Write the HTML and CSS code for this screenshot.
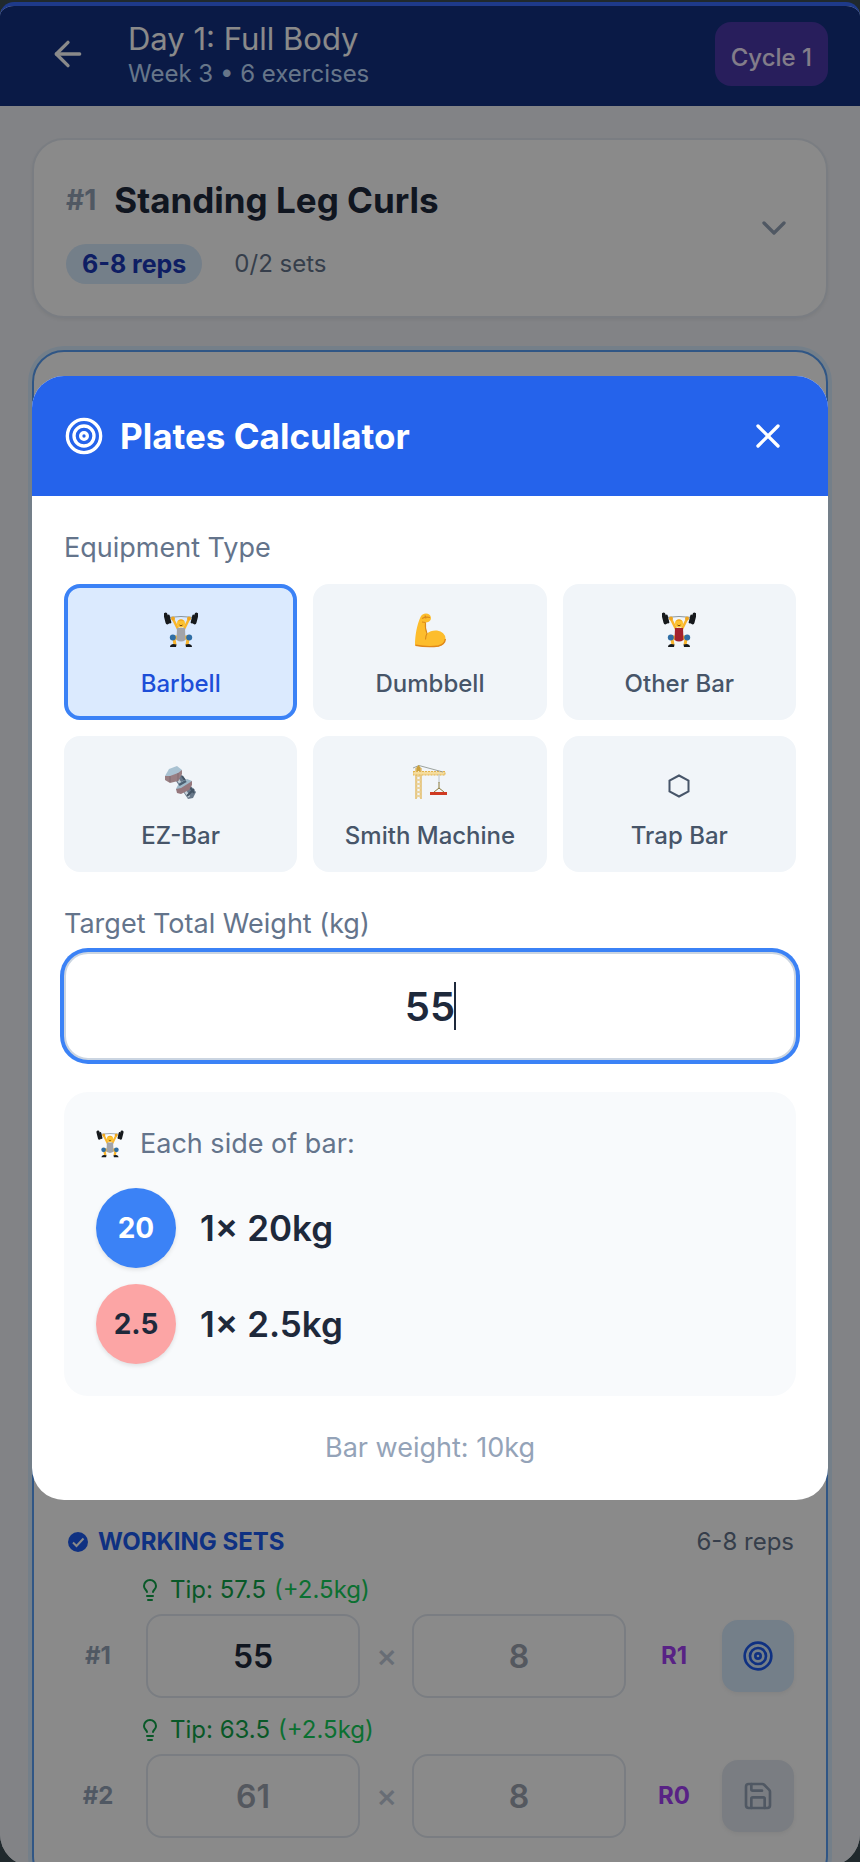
FILE: index.html
```html
<!DOCTYPE html>
<html lang="en">
<head>
  <meta charset="UTF-8">
  <meta name="viewport" content="width=device-width, initial-scale=1.0">
  <title>Day 1: Full Body</title>
  <link rel="stylesheet" href="styles.css">
</head>
<body>
  <!-- Shared icons -->
  <svg class="sprite" aria-hidden="true">
    <symbol id="icon-target" viewBox="0 0 24 24">
      <circle cx="12" cy="12" r="10"/><circle cx="12" cy="12" r="6"/><circle cx="12" cy="12" r="2"/>
    </symbol>
    <symbol id="icon-bulb" viewBox="0 0 24 24">
      <path d="M15 14c.2-1 .7-1.7 1.5-2.5 1-.9 1.5-2.2 1.5-3.5A6 6 0 0 0 6 8c0 1 .2 2.2 1.5 3.5.7.7 1.3 1.5 1.5 2.5"/>
      <path d="M9 18h6"/><path d="M10 22h4"/>
    </symbol>
    <symbol id="lifter" viewBox="0 0 34 36">
      <path d="M3 5.500Q17 3.500 31 5.500" fill="none" stroke="#8a969e" stroke-width="1"/>
      <path d="M9 7l5 10M25 7l-5 10" stroke="#f9b52c" stroke-width="2.600" stroke-linecap="round"/>
      <circle cx="9" cy="6.500" r="2" fill="#eda51f"/><circle cx="25" cy="6.500" r="2" fill="#eda51f"/>
      <g fill="#16191c">
        <rect x="0.500" y="0.500" width="4" height="12" rx="2" transform="rotate(-14 2.500 6.500)"/>
        <rect x="4" y="2.500" width="2.500" height="9" rx="1" transform="rotate(-14 5.500 7)"/>
        <rect x="29.500" y="0.500" width="4" height="12" rx="2" transform="rotate(14 31.500 6.500)"/>
        <rect x="27.500" y="2.500" width="2.500" height="9" rx="1" transform="rotate(14 28.500 7)"/>
      </g>
      <path d="M10 27l1 6M24 27l-1 6" stroke="#f9b52c" stroke-width="3"/>
      <path d="M15 26l-6-1M19 26l6-1" stroke="#f9b52c" stroke-width="4"/>
      <path d="M13 16h8l.5 12q-4.500 3-9 0z" fill="currentColor"/>
      <circle cx="17" cy="11.500" r="4" fill="#fdc22f"/>
      <path d="M13.500 9.500q3.500-4.500 7 0q-3.500-1.500-7 0z" fill="#f3a91c"/>
      <path d="M15.500 13q1.500 1.500 3 0" fill="none" stroke="#7a4a12" stroke-width="1"/>
      <circle cx="8.800" cy="25.500" r="3" fill="#2f6ea5"/><circle cx="25.200" cy="25.500" r="3" fill="#2f6ea5"/>
      <path d="M6 35q0-2.500 3-3l3.500.5-.5 2.500zM28 35q0-2.500-3-3l-3.500.5.5 2.500z" fill="#16191c"/>
    </symbol>
  </svg>

  <div class="screen">
    <header class="top-bar">
      <button class="back-btn" aria-label="Back">
        <svg class="icon icon-lg" viewBox="0 0 24 24"><path d="M12 19l-7-7 7-7"/><path d="M19 12H5"/></svg>
      </button>
      <div class="top-text">
        <h1>Day 1: Full Body</h1>
        <p>Week 3 • 6 exercises</p>
      </div>
      <button class="cycle-btn">Cycle 1</button>
    </header>

    <main>
      <section class="card summary">
        <div class="summary-info">
          <div class="summary-title">
            <span class="number">#1</span>
            <h2>Standing Leg Curls</h2>
          </div>
          <div class="summary-meta">
            <span class="pill">6-8 reps</span>
            <span>0/2 sets</span>
          </div>
        </div>
        <svg class="icon icon-lg chevron" viewBox="0 0 24 24"><path d="M6 9l6 6 6-6"/></svg>
      </section>

      <section class="card current">
        <div class="exercise-body"></div>

        <div class="sets-heading">
          <svg class="check" viewBox="0 0 24 24"><circle cx="12" cy="12" r="10"/><path d="M7 12.500l3.500 3.500 7-7.500"/></svg>
          <h3>WORKING SETS</h3>
          <span>6-8 reps</span>
        </div>

        <div class="set">
          <p class="tip"><svg class="icon icon-sm"><use href="#icon-bulb"/></svg><span>Tip: 57.5</span><em>(+2.5kg)</em></p>
          <div class="set-row">
            <span class="number">#1</span>
            <input type="text" value="55" placeholder="55" aria-label="Set 1 weight">
            <span class="times">×</span>
            <input type="text" placeholder="8" aria-label="Set 1 reps">
            <span class="rir">R1</span>
            <button class="set-btn plates" aria-label="Plates calculator"><svg class="icon icon-md"><use href="#icon-target"/></svg></button>
          </div>
        </div>

        <div class="set">
          <p class="tip"><svg class="icon icon-sm"><use href="#icon-bulb"/></svg><span>Tip: 63.5</span><em>(+2.5kg)</em></p>
          <div class="set-row">
            <span class="number">#2</span>
            <input type="text" placeholder="61" aria-label="Set 2 weight">
            <span class="times">×</span>
            <input type="text" placeholder="8" aria-label="Set 2 reps">
            <span class="rir">R0</span>
            <button class="set-btn save" aria-label="Save set">
              <svg class="icon icon-md" viewBox="0 0 24 24"><path d="M15.200 3a2 2 0 0 1 1.400.6l3.800 3.800a2 2 0 0 1 .6 1.400V19a2 2 0 0 1-2 2H5a2 2 0 0 1-2-2V5a2 2 0 0 1 2-2z"/><path d="M17 21v-7a1 1 0 0 0-1-1H8a1 1 0 0 0-1 1v7"/><path d="M7 3v4a1 1 0 0 0 1 1h7"/></svg>
            </button>
          </div>
        </div>
      </section>
    </main>

    <!-- Plates calculator -->
    <div class="overlay">
      <div class="modal" role="dialog" aria-labelledby="modal-title">
        <div class="modal-header">
          <svg class="icon icon-lg"><use href="#icon-target"/></svg>
          <h2 id="modal-title">Plates Calculator</h2>
          <button class="close-btn" aria-label="Close">
            <svg class="icon icon-lg" viewBox="0 0 24 24"><path d="M18 6L6 18"/><path d="M6 6l12 12"/></svg>
          </button>
        </div>

        <div class="modal-body">
          <p class="label">Equipment Type</p>
          <div class="equipment">
            <button class="active">
              <svg class="emoji lifter-grey"><use href="#lifter"/></svg>
              Barbell
            </button>
            <button>
              <svg class="emoji" viewBox="0 0 34 36">
                <path d="M2 33.500C2 23 4 13 7.500 5Q9 1.500 13 1.500q4 0 4.800 3.500.7 3-2 4.800-2 1-3.300.7-.8 5 1.500 11Q18 18 24 18.500q8 1.500 8.500 8 0 6-7 8-11 1.500-23.500-1z" fill="#fdbd2c"/>
                <path d="M2.500 33.200q12 2.300 23 .8 6.500-1.800 6.800-7" fill="none" stroke="#e0871a" stroke-width="1.400"/>
                <path d="M12.500 10.500q-.6 6.500 1.500 11-1.500 2.500-1.500 6M9 6.500q4-2 8-1M9 10l3.500.5M12 3.500l1 3" fill="none" stroke="#d98a1b" stroke-width="1.100"/>
              </svg>
              Dumbbell
            </button>
            <button>
              <svg class="emoji lifter-red"><use href="#lifter"/></svg>
              Other Bar
            </button>
            <button>
              <svg class="emoji" viewBox="0 0 34 36">
                <path d="M10 14l5-6 17 20-3 6-5 1z" fill="#68788a"/>
                <path d="M13 14l12 19" stroke="#c3d0d8" stroke-width="2.500"/>
                <path d="M18 12l12 17M23 32l7-7" stroke="#435465" stroke-width="2"/>
                <path d="M1 12L5 5l8-3 5 4-4 7-8 4z" fill="#a9c2d2"/>
                <path d="M1 12l5 0 8-3 4-3v4l-4 7-8 2-5-3z" fill="#997f83"/>
                <path d="M6 12v6M14 9v8" stroke="#7a6870" stroke-width=".8"/>
                <path d="M12 25l3-6 8-4 5 2-2 6-9 6z" fill="#9fb9c9"/>
                <path d="M12 25l5-1 8-5 3-2v4l-3 5-8 4-4-1z" fill="#95777d"/>
                <path d="M15 21l7-4" stroke="#4c6072" stroke-width="2.500"/>
              </svg>
              EZ-Bar
            </button>
            <button>
              <svg class="emoji" viewBox="0 0 34 36">
                <path d="M3 35V4M8 35V4" stroke="#dfb04a" stroke-width="1.200"/>
                <path d="M3 10l5 4-5 4 5 4-5 4 5 4-5 4M8 10l-5 4 5 4-5 4 5 4-5 4 5 4" fill="none" stroke="#e9c77c" stroke-width="1"/>
                <rect x="0" y="7.500" width="32" height="3.500" fill="#f5dc9c" stroke="#e2b34c" stroke-width="1" stroke-dasharray="2 1"/>
                <path d="M0 4l6-2.500L30 8" fill="none" stroke="#929894" stroke-width=".9"/>
                <path d="M3.500 3.500L5.500 1l2 2.500V7h-4z" fill="#caa03c"/>
                <path d="M26 10v9" stroke="#bcc4c8" stroke-width="1"/>
                <path d="M26 18v6M26 24l-5 4M26 24l5 4" fill="none" stroke="#8b7b3c" stroke-width="1"/>
                <rect x="17" y="28" width="17" height="3" fill="#cf3a22"/>
              </svg>
              Smith Machine
            </button>
            <button>
              <svg class="emoji" viewBox="0 0 34 36"><path d="M17 11.500l9.500 5.200v10.600L17 32.500l-9.500-5.200V16.700z" fill="none" stroke="#475569" stroke-width="2"/></svg>
              Trap Bar
            </button>
          </div>

          <label class="label weight-label" for="target-weight">Target Total Weight (kg)</label>
          <div class="weight-field">
            <input type="text" id="target-weight" inputmode="decimal" value="55">
            <span class="caret"></span>
          </div>

          <div class="result">
            <p class="label result-title"><svg class="emoji-sm lifter-grey"><use href="#lifter"/></svg>Each side of bar:</p>
            <ul>
              <li><span class="plate plate-20">20</span>1× 20kg</li>
              <li><span class="plate plate-2">2.5</span>1× 2.5kg</li>
            </ul>
          </div>

          <p class="bar-weight">Bar weight: 10kg</p>
        </div>
      </div>
    </div>
  </div>
</body>
</html>
```
FILE: styles.css
```css
* {
  box-sizing: border-box;
}
body {
  margin: 0;
  padding-top: 2px;
  height: 100vh;
  overflow: hidden;
  background: #20292d;
  color: #1e293b;
  font-family: Inter, "Liberation Sans", sans-serif;
  font-size: 24px;
  line-height: 32px;
}
h1, h2, h3, p, ul {
  margin: 0;
  padding: 0;
}
button, input {
  font: inherit;
  color: inherit;
}
button {
  border: 0;
  padding: 0;
  background: none;
  cursor: pointer;
}
.sprite {
  position: absolute;
  width: 0;
  height: 0;
}
.icon {
  flex-shrink: 0;
  fill: none;
  stroke: currentColor;
  stroke-width: 2;
  stroke-linecap: round;
  stroke-linejoin: round;
}
.icon-sm {
  width: 24px;
  height: 24px;
}
.icon-md {
  width: 32px;
  height: 32px;
}
.icon-lg {
  width: 40px;
  height: 40px;
}

.screen {
  position: relative;
  height: calc(100vh + 2px);
  overflow: hidden;
  border-top: 4px solid #1e3a8a;
  border-radius: 14px 14px 32px 32px;
  background: #f1f3f8;
}

/* Top bar */
.top-bar {
  display: flex;
  align-items: center;
  padding: 12px 32px 16px;
  background: #133182;
  color: #fff;
}
.back-btn {
  display: flex;
  align-items: center;
  justify-content: center;
  width: 72px;
  height: 72px;
  margin-right: 24px;
}
.top-text {
  flex: 1;
  padding-top: 2px;
}
.top-text h1 {
  font-size: 31px;
  font-weight: 400;
  line-height: 38px;
}
.top-text p {
  color: #bfdbfe;
}
.cycle-btn {
  height: 64px;
  padding: 8px 16px 0;
  border-radius: 16px;
  background: #4a38aa;
  color: #f3e8ff;
  font-weight: 500;
}

/* Exercise cards */
main {
  padding: 32px;
}
.card {
  padding: 32px;
  border: 2px solid #e2e8f0;
  border-radius: 32px;
  background: #fff;
  box-shadow: 0 2px 4px rgba(0, 0, 0, 0.06);
}
.number {
  color: #94a3b8;
  font-weight: 700;
}
.summary {
  display: flex;
  align-items: center;
  justify-content: space-between;
  margin-bottom: 32px;
}
.summary-title {
  display: flex;
  align-items: center;
  gap: 18px;
  margin-bottom: 16px;
}
.summary-title .number {
  font-size: 28px;
}
.summary-title h2 {
  font-size: 35px;
  line-height: 56px;
}
.summary-meta {
  display: flex;
  align-items: center;
  gap: 32px;
  color: #64748b;
}
.pill {
  padding: 4px 16px;
  border-radius: 20px;
  background: #d6eafe;
  color: #1a38b8;
  font-size: 25px;
  font-weight: 700;
}
.chevron {
  color: #94a3b8;
}
.current {
  border-color: #5aa0f5;
  box-shadow: 0 0 0 4px #d6eafe;
}
.exercise-body {
  height: 1142px;
}
.sets-heading {
  display: flex;
  align-items: center;
  gap: 8px;
  margin-bottom: 16px;
  color: #64748b;
}
.sets-heading h3 {
  flex: 1;
  color: #1d5cf0;
  font-size: 24px;
}
.check {
  width: 24px;
  height: 24px;
  fill: #1d5cf0;
}
.check path {
  fill: none;
  stroke: #fff;
  stroke-width: 2;
}
.set {
  margin-bottom: 16px;
}
.tip {
  display: flex;
  align-items: center;
  gap: 8px;
  margin: 0 0 8px 72px;
  color: #0fa348;
}
.tip em {
  color: #16cf5c;
  font-style: normal;
}
.set-row {
  display: grid;
  grid-template-columns: 64px 1fr 20px 1fr 64px 72px;
  gap: 16px;
  align-items: center;
  text-align: center;
}
.set-row input {
  width: 100%;
  height: 84px;
  border: 2px solid #e2e8f0;
  border-radius: 16px;
  background: #fff;
  font-size: 32px;
  font-weight: 600;
  text-align: center;
}
.set-row input::placeholder {
  color: #9ca3af;
  opacity: 1;
}
.times {
  color: #c0c9d8;
  font-size: 32px;
  font-weight: 500;
}
.rir {
  color: #a33ff5;
  font-weight: 700;
}
.set-btn {
  display: flex;
  align-items: center;
  justify-content: center;
  height: 72px;
  border-radius: 16px;
  box-shadow: 0 2px 4px rgba(0, 0, 0, 0.06);
}
.plates {
  background: #d6eafe;
  color: #1d5cf0;
}
.save {
  background: #e2e8f0;
  color: #94a3b8;
}

/* Modal */
.overlay {
  position: absolute;
  inset: 0 0 -4px;
  display: flex;
  align-items: center;
  justify-content: center;
  padding: 0 32px;
  background: rgba(0, 0, 0, 0.46);
}
.modal {
  width: 100%;
  overflow: hidden;
  border-radius: 32px;
  background: #fff;
}
.modal-header {
  display: flex;
  align-items: center;
  gap: 16px;
  padding: 32px;
  background: #2563eb;
  color: #fff;
}
.modal-header h2 {
  flex: 1;
  font-size: 35px;
  line-height: 48px;
}
.close-btn {
  display: flex;
  align-items: center;
  justify-content: center;
  width: 56px;
  height: 56px;
}
.modal-body {
  padding: 32px;
}
.label {
  display: block;
  color: #64748b;
  font-size: 27px;
  line-height: 40px;
}
.equipment {
  display: grid;
  grid-template-columns: repeat(3, 1fr);
  gap: 16px;
  margin: 16px 0 32px;
}
.equipment button {
  display: flex;
  flex-direction: column;
  align-items: center;
  gap: 20px;
  height: 136px;
  padding-top: 24px;
  border: 4px solid #f1f5f9;
  border-radius: 16px;
  background: #f1f5f9;
  color: #475569;
  font-weight: 500;
}
.equipment .active {
  border-color: #3b82f6;
  background: #dbeafe;
  color: #1d4ed8;
}
.emoji {
  width: 34px;
  height: 36px;
}
.emoji-sm {
  width: 28px;
  height: 28px;
}
.lifter-grey {
  color: #a3a4a8;
}
.lifter-red {
  color: #a3222c;
}
.weight-label {
  margin-bottom: 8px;
}
.weight-field {
  position: relative;
  margin-bottom: 32px;
}
.weight-field input {
  display: block;
  width: 100%;
  height: 108px;
  border: 2px solid #cbd5e1;
  border-radius: 24px;
  outline: none;
  box-shadow: 0 0 0 4px #3b82f6;
  font-size: 40px;
  font-weight: 600;
  text-align: center;
  caret-color: transparent;
}
.caret {
  position: absolute;
  top: 30px;
  left: calc(50% + 24px);
  width: 2px;
  height: 48px;
  background: #1e293b;
}
.result {
  margin-bottom: 32px;
  padding: 32px;
  border-radius: 24px;
  background: #f8fafc;
}
.result-title {
  display: flex;
  align-items: center;
  gap: 16px;
  margin-bottom: 24px;
}
.result ul {
  display: grid;
  gap: 16px;
  list-style: none;
}
.result li {
  display: flex;
  align-items: center;
  gap: 24px;
  font-size: 35px;
  font-weight: 600;
}
.plate {
  display: flex;
  align-items: center;
  justify-content: center;
  width: 80px;
  height: 80px;
  border-radius: 50%;
  box-shadow: 0 2px 4px rgba(0, 0, 0, 0.1);
  font-size: 28px;
  font-weight: 700;
}
.plate-20 {
  background: #3b82f6;
  color: #fff;
}
.plate-2 {
  background: #fca5a5;
}
.bar-weight {
  color: #94a3b8;
  font-size: 27px;
  line-height: 40px;
  text-align: center;
}
```
